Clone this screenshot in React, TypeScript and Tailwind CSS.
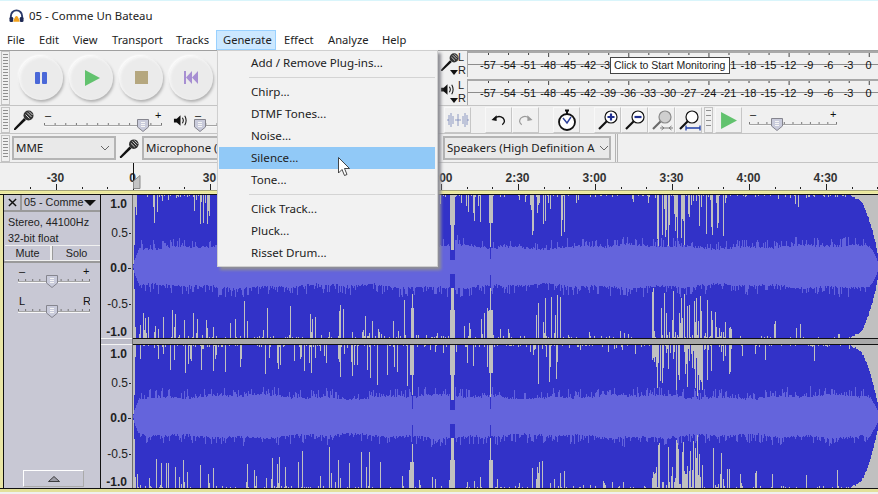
import React from 'react';

const ui = "font-['Noto_Sans',sans-serif]";
const arial = "font-['Liberation_Sans',Arial,sans-serif]";

const menus = [
  ['File', 'w-[32px]'],
  ['Edit', 'w-[34px]'],
  ['View', 'w-[39px]'],
  ['Transport', 'w-[64px]'],
  ['Tracks', 'w-[40px]'],
];

const Gripper = ({ h }: { h: string }) => (
  <div className={`${h} w-[9px] ml-[1px] mr-[1px] shrink-0 border border-[#c4c4c4] px-[1px] py-[2px]`}>
    <div className="h-full w-full bg-[repeating-linear-gradient(to_bottom,#8f8f8f_0,#8f8f8f_1px,#f0f0f0_1px,#f0f0f0_3px)]" />
  </div>
);

const Mic = ({ className }: { className: string }) => (
  <svg viewBox="0 0 22 22" className={className}>
    <path d="M1 21 L2.5 21 L13 11 L11 9 L1 19.5 Z" fill="#111" />
    <circle cx="15.5" cy="6.5" r="5" fill="#333" />
    <path d="M12.5 5.5 L16.5 9.5 M14 3.5 L18.5 8 M16 2.5 L19.5 6" stroke="#e4e4e4" strokeWidth="0.9" />
  </svg>
);

const Speaker = ({ className }: { className: string }) => (
  <svg viewBox="0 0 16 16" className={className}>
    <path d="M1 6 H4 L8 2.5 V13.5 L4 10 H1 Z" fill="#111" />
    <path d="M10 5 Q12 8 10 11 M12.5 3 Q15.5 8 12.5 13" stroke="#111" strokeWidth="1.1" fill="none" />
  </svg>
);

// shield shaped thumb with the tick track behind it
const Slider = ({ w, pos, left, right, ticks = 11 }: { w: number; pos: number; left: string; right: string; ticks?: number }) => (
  <svg width={w} height={22} viewBox={`0 0 ${w} 22`} className="shrink-0 block">
    <text x={1} y={9} fontSize="11" fontFamily="Liberation Sans" fill="#111">{left}</text>
    <text x={w - 7} y={9} fontSize="11" fontFamily="Liberation Sans" fill="#111">{right}</text>
    <path d={`M0.5 13 V15.5 H${w}`} stroke="#a4a4a4" fill="none" />
    <path d={`M0 16.5 H${w}`} stroke="#f8f8f8" fill="none" />
    {Array.from({ length: ticks }, (_, i) => (
      <rect key={i} x={(i * (w - 1)) / (ticks - 1)} y={13} width={1} height={2} fill="#777" />
    ))}
    <path d={`M${pos - 5.5} 9.5 H${pos + 5.5} V17 L${pos} 21.5 L${pos - 5.5} 17 Z`} fill="#c9cbdb" stroke="#85858e" />
    <path d={`M${pos - 2} 12.5 H${pos + 2} M${pos - 2} 14.5 H${pos + 2} M${pos - 2} 16.5 H${pos + 2}`} stroke="#f5f5f5" />
  </svg>
);

const Round = ({ children }: { children: React.ReactNode }) => (
  <div className="w-[44px] h-[44px] rounded-full bg-[#ebebeb] flex items-center justify-center shadow-[1px_2px_3px_#b0b0b0,-1px_-1px_2px_#ffffff,inset_1px_1px_3px_#fbfbfb] shrink-0">
    {children}
  </div>
);

const ToolBtn = ({ children, className = '' }: { children: React.ReactNode; className?: string }) => (
  <div className={`w-[27px] h-[26px] flex items-center justify-center border-r border-b border-[#c6c6c6] border-t border-t-[#f8f8f8] border-l border-l-[#f8f8f8] shrink-0 ${className}`}>
    {children}
  </div>
);

const ZoomIcon = ({ inner, lens = '#111', handle = '#111' }: { inner?: React.ReactNode; lens?: string; handle?: string }) => (
  <svg viewBox="0 0 24 24" className="w-[24px] h-[24px]">
    <path d="M3 21 L11 13" stroke={handle} strokeWidth="2.2" />
    <circle cx="15" cy="9" r="6" fill={lens === '#111' ? '#fff' : '#cfcfcf'} stroke={lens} strokeWidth="1.2" />
    {inner}
  </svg>
);

const scale = ['-57', '-54', '-51', '-48', '-45', '-42', '-39', '-36', '-33', '-30', '-27', '-24', '-21', '-18', '-15', '-12', '-9', '-6', '-3', '0'];
const underTip = ['-36', '-33', '-30', '-27', '-24'];

const Meter = ({ icon, covered }: { icon: React.ReactNode; covered?: boolean }) => (
  <div className="flex h-[26px]">
    <div className="w-[18px] mt-[1px] relative shrink-0">{icon}</div>
    <div className={`w-[9px] shrink-0 text-[11px] leading-[13px] ${arial} text-[#222]`}>
      <div>L</div>
      <div>R</div>
    </div>
    <div className={`relative grow border-t-2 border-l border-r-2 border-[#a8a8a8] pl-[11px] ${arial}`}>
      <svg width="400" height="4" className="block absolute top-0 left-[20px]">
        {scale.map((s, i) => (
          <rect key={s} x={i * 20.04} y={0} width={1} height={i % 4 === 3 ? 4 : 2} fill="#444" />
        ))}
      </svg>
      <div className="absolute left-0 right-0 top-[11px] h-px bg-[#8c8c8c]" />
      <div className="relative flex mt-[5px] -ml-[1px]">
        {scale.map((s) => (
          <div key={s} className="w-[20.04px] shrink-0 text-center text-[11px] leading-[14px] text-[#111]">
            {covered && underTip.includes(s) ? '' : s}
          </div>
        ))}
      </div>
    </div>
  </div>
);

const Combo = ({ label, w, clip }: { label: string; w: string; clip?: boolean }) => (
  <div className={`${w} h-[24px] border-2 border-[#b4b4b4] bg-[#e9e9e9] flex items-center pl-[2px] shrink-0 text-[11.5px] text-[#222] ${ui} overflow-hidden`}>
    <span className="whitespace-nowrap grow">{label}</span>
    {!clip && (
      <svg viewBox="0 0 10 6" className="w-[10px] h-[6px] mx-[4px] shrink-0">
        <path d="M1 1 L5 5 L9 1" stroke="#666" fill="none" />
      </svg>
    )}
  </div>
);

const Ruler = () => {
  const labels = ['-30', '0', '30', '1:00', '1:30', '2:00', '2:30', '3:00', '3:30', '4:00', '4:30'];
  return (
    <div className="h-[27px] bg-[#f0f0f0] relative shrink-0 overflow-hidden">
      <div className={`flex pl-[17px] pt-[8px] h-[20px] ${arial} text-[12px] font-bold text-[#333] leading-[14px]`}>
        {labels.map((l) => (
          <div key={l} className="w-[77px] shrink-0 text-center">{l}</div>
        ))}
      </div>
      <svg width="878" height="7" className="block">
        {Array.from({ length: 34 }, (_, i) => {
          const x = 56 + (i - 1) * 25.67;
          const major = (i - 1) % 3 === 0;
          return <rect key={i} x={Math.round(x)} y={major ? 1 : 4} width={1} height={major ? 6 : 2} fill="#222" />;
        })}
      </svg>
      <div className="absolute left-[133px] top-0 w-px h-[26px] bg-[#111]" />
      <svg viewBox="0 0 8 14" className="absolute left-[133px] top-[12px] w-[8px] h-[14px]">
        <path d="M0.5 6 L7 0.5 V13.5 H0.5 Z" fill="#c4c4c4" stroke="#8a8a8a" />
      </svg>
    </div>
  );
};

const VRuler = () => (
  <div className={`h-[143px] w-full flex flex-col items-end ${arial} text-[12px] leading-[14px] text-[#222] pr-[1px] pt-[2px]`}>
    <div className="font-bold pr-[4px]">1.0</div>
    <div className="mt-[15px] flex items-center"><span>0.5</span><span className="w-[2px] h-px bg-[#222] ml-[1px]" /></div>
    <div className="mt-[21px] flex items-center font-bold"><span>0.0</span><span className="w-[3px] h-px bg-[#222] ml-[1px]" /></div>
    <div className="mt-[22px] flex items-center"><span>-0.5</span><span className="w-[2px] h-px bg-[#222] ml-[1px]" /></div>
    <div className="mt-[14px] flex items-center font-bold pr-[4px]"><span>-1.0</span></div>
  </div>
);

// seeded waveform, one column per pixel
function buildWave(seed: number, gaps: number[][], dense: number[][], thin: number[]) {
  let s = seed;
  const rnd = () => {
    s = (s * 1664525 + 1013904223) % 4294967296;
    return s / 4294967296;
  };
  const fade = [[851, 71], [860, 67], [863, 62], [870, 44], [875, 25], [878, 9]];
  const mid = 71.5;
  let peak = '';
  let rms = '';
  for (let x = 133; x < 878; x++) {
    let limit = 71.5;
    if (x === 133) limit = 3;
    if (x === 134) limit = 22;
    if (x === 135) limit = 60;
    for (let i = 0; i < fade.length - 1; i++) {
      if (x >= fade[i][0] && x <= fade[i + 1][0]) {
        const t = (x - fade[i][0]) / (fade[i + 1][0] - fade[i][0]);
        limit = fade[i][1] + (fade[i + 1][1] - fade[i][1]) * t - rnd() * 2;
      }
    }
    let top = rnd() < 0.18 ? rnd() * 2 : 0;
    let bot = rnd() < 0.18 ? rnd() * 2 : 0;
    for (const [a, b, p, d, base] of dense) {
      if (x >= a && x < b) {
        if (rnd() < p) top = Math.max(top, (base || 0) + Math.pow(rnd(), 1.4) * d * 1.15);
        if (rnd() < p) bot = Math.max(bot, (base || 0) + Math.pow(rnd(), 1.4) * d * 1.15);
      }
    }
    for (const [a, b, dt, db] of gaps) {
      if (x >= a && x < b) {
        top = Math.max(top, dt);
        bot = Math.max(bot, db);
      }
    }
    const up = Math.max(1, Math.min(limit, 71.5 - top));
    const down = Math.max(1, Math.min(limit, 71.5 - bot));
    peak += `M${x - 133}.5 ${(mid - up).toFixed(0)}V${(mid + down).toFixed(0)}`;
    const base = 18.5 + Math.sin(x / 31) * 1.5 + Math.sin(x / 9 + seed) * 1;
    let r = base + rnd() * 2.5;
    let r2 = base + rnd() * 2.5;
    if (rnd() < 0.35) r += rnd() * 9;
    if (rnd() < 0.35) r2 += rnd() * 9;
    if (x < 140) {
      r = Math.min(r, 4 + (x - 133) * 2.5);
      r2 = Math.min(r2, 4 + (x - 133) * 2.5);
    }
    if (x >= 450 && x < 455) {
      r = 7;
      r2 = 7;
    }
    if (thin.includes(x)) {
      r = 8;
      r2 = 8;
    }
    r = Math.min(r, limit * 0.45);
    r2 = Math.min(r2, limit * 0.45);
    rms += `M${x - 133}.5 ${(mid - r).toFixed(0)}V${(mid + r2).toFixed(0)}`;
  }
  return { peak, rms };
}

const denseA = [
  [136, 217, 0.22, 26],
  [217, 320, 0.2, 34],
  [320, 410, 0.2, 36],
  [414, 450, 0.1, 10],
  [455, 490, 0.2, 26],
  [493, 530, 0.1, 10],
  [530, 565, 0.35, 38],
  [565, 652, 0.1, 8],
  [652, 703, 0.6, 44, 3],
  [703, 732, 0.45, 36],
  [732, 850, 0.07, 16],
];
const notches = [
  [450, 455, 30, 28],
  [451, 454, 55, 50],
  [489, 493, 28, 28],
  [490, 491, 52, 50],
];
const wave1 = buildWave(7, [[411, 414, 8, 30], [412, 413, 8, 44], ...notches], denseA, [490]);
const wave2 = buildWave(91, [[410, 414, 30, 26], [412, 413, 50, 44], ...notches], denseA, [412, 490]);

const Wave = ({ d }: { d: { peak: string; rms: string } }) => (
  <svg width="745" height="143" viewBox="0 0 745 143" shapeRendering="crispEdges" className="block bg-[#c0c0c0]">
    <path d={d.peak} stroke="#3232c8" strokeWidth="1" fill="none" />
    <path d={d.rms} stroke="#6464dc" strokeWidth="1" fill="none" />
  </svg>
);

const TrackPanel = () => (
  <div className={`w-[96px] shrink-0 bg-[#c8c8d4] flex flex-col text-[#222] ${arial} text-[10.8px]`}>
    <div className="flex h-[17px] border-b-2 border-[#9a9a9a]">
      <div className="w-[17px] flex items-center justify-center border-r-2 border-[#9a9a9a] ml-[1px]">
        <svg viewBox="0 0 10 10" className="w-[9px] h-[9px]">
          <path d="M1 1 L9 9 M9 1 L1 9" stroke="#111" strokeWidth="1.6" />
        </svg>
      </div>
      <div className="grow flex items-center pl-[2px] whitespace-nowrap">
        <span className="grow">05 - Comme</span>
        <svg viewBox="0 0 12 6" className="w-[12px] h-[6px] mr-[4px]">
          <path d="M0 0 H12 L6 6 Z" fill="#111" />
        </svg>
      </div>
    </div>
    <div className="pl-[4px] pt-[2px] leading-[16px] h-[33px]">
      <div>Stereo, 44100Hz</div>
      <div>32-bit float</div>
    </div>
    <div className="flex h-[16px] ml-[1px] text-center leading-[14px] border-y border-[#f0f0f0]">
      <div className="w-[47px] border-r-2 border-[#f0f0f0]">Mute</div>
      <div className="grow border-l border-[#9a9a9a]">Solo</div>
    </div>
    <div className="border-t-2 border-[#9a9a9a] pl-[14px] pt-[3px]">
      <Slider w={72} pos={34} left="–" right="+" ticks={11} />
      <div className="mt-[8px]">
        <Slider w={72} pos={34} left="L" right="R" ticks={11} />
      </div>
    </div>
    <div className="mt-auto ml-[19px] mb-[1px] w-[61px] h-[17px] border border-t-white border-l-white border-r-[#aaa] border-b-[#aaa] flex items-center justify-center">
      <svg viewBox="0 0 12 6" className="w-[12px] h-[6px]">
        <path d="M6 0.5 L11.5 5.5 H0.5 Z" fill="#9a9aa4" stroke="#222" strokeWidth="0.8" />
      </svg>
    </div>
  </div>
);

const Tracks = () => (
  <div className="shrink-0">
    <div className="h-[5px] bg-[linear-gradient(to_bottom,#6f6f60,#f1eea0_30%,#e7e49a_70%,#f3f0b5)] border-b border-[#111]" />
    <div className="flex h-[293px]">
      <div className="w-[3px] bg-[#e9e6a4]" />
      <div className="w-px bg-[#111]" />
      <TrackPanel />
      <div className="w-px bg-[#111]" />
      <div className="w-[31px] bg-[#c8c8d4] flex flex-col">
        <VRuler />
        <div className="h-[7px] border-y border-[#f4f4f4] bg-[#bcbcc8]" />
        <VRuler />
      </div>
      <div className="w-px bg-[#6f6f6f]" />
      <div className="w-[745px]">
        <Wave d={wave1} />
        <div className="h-[7px] bg-[#a9a9a9] border-y border-[#111]" />
        <Wave d={wave2} />
      </div>
    </div>
    <div className="h-[4px] border-t border-[#111] bg-[#e3e09a]" />
  </div>
);

const GenerateMenu = () => {
  const Item = ({ t, on }: { t: string; on?: boolean }) => (
    <div className={`h-[22px] flex items-center pl-[32px] ${on ? 'bg-[#91c9f7]' : ''}`}>{t}</div>
  );
  const Sep = () => (
    <div className="h-[7px] pl-[30px] flex items-center">
      <div className="h-px w-full bg-[#d4d4d4]" />
    </div>
  );
  return (
    <div className={`absolute left-[217px] top-[50px] w-[221px] h-[217px] bg-[#f2f2f2] border border-[#cfcfcf] pl-[1px] pr-[2px] pt-[1px] shadow-[3px_3px_3px_#8f8f95] text-[11.6px] text-[#222] ${ui}`}>
      <Item t="Add / Remove Plug-ins..." />
      <Sep />
      <Item t="Chirp..." />
      <Item t="DTMF Tones..." />
      <Item t="Noise..." />
      <Item t="Silence..." on />
      <Item t="Tone..." />
      <Sep />
      <Item t="Click Track..." />
      <Item t="Pluck..." />
      <Item t="Risset Drum..." />
    </div>
  );
};

export default function App() {
  return (
    <div className={`w-[878px] h-[494px] overflow-hidden relative bg-[#f0f0f0] flex flex-col ${ui}`}>
      {/* title bar */}
      <div className="h-[30px] bg-white border-t border-[#d9f5fb] flex items-center pl-[9px] shrink-0 text-[11.4px] text-[#222]">
        <svg viewBox="0 0 16 14" className="w-[15px] h-[14px] mr-[5px] shrink-0">
          <path d="M2 9 V7 A6 6 0 0 1 14 7 V9" stroke="#2b3a6b" strokeWidth="2" fill="none" />
          <rect x="0.5" y="8" width="4" height="5.5" rx="1.5" fill="#1f2a55" />
          <rect x="11.5" y="8" width="4" height="5.5" rx="1.5" fill="#1f2a55" />
          <path d="M4.5 13 Q8 1 11.5 13 Z" fill="#f2a21e" />
        </svg>
        <span>05 - Comme Un Bateau</span>
      </div>
      {/* menu bar */}
      <div className="h-[20px] bg-white flex items-center shrink-0 text-[11.2px] text-[#222] pl-[7px]">
        {menus.map(([m, c]) => (
          <span key={m} className={c}>{m}</span>
        ))}
        <span className="w-[60px] h-[20px] pl-[6px] bg-[#cce8ff] border border-[#99d1ff] flex items-center">Generate</span>
        <span className="ml-[8px] w-[44px]">Effect</span>
        <span className="w-[54px]">Analyze</span>
        <span>Help</span>
      </div>
      {/* row 1 */}
      <div className="h-[55px] flex border-t border-[#a0a0a0] shrink-0">
        <Gripper h="h-[54px]" />
        <div className="flex items-center gap-[6px] pl-[8px] -mt-[1px]">
          <Round>
            <div className="flex gap-[2px]">
              <div className="w-[5px] h-[12px] bg-[#4a68d8] rounded-[1px]" />
              <div className="w-[5px] h-[12px] bg-[#4a68d8] rounded-[1px]" />
            </div>
          </Round>
          <Round>
            <svg viewBox="0 0 15 16" className="w-[15px] h-[16px] ml-[2px]">
              <path d="M0 0 L15 8 L0 16 Z" fill="#62c26e" />
            </svg>
          </Round>
          <Round>
            <div className="w-[13px] h-[13px] bg-[#b5a77f]" />
          </Round>
          <Round>
            <svg viewBox="0 0 14 13" className="w-[14px] h-[13px]">
              <path d="M0 0 H2 V13 H0 Z M8 0 V13 L2 6.5 Z M14 0 V13 L8 6.5 Z" fill="#a78fd2" />
            </svg>
          </Round>
        </div>
        <div className="ml-auto w-[438px] flex flex-col gap-[2px]">
          <Meter covered icon={<><Mic className="w-[20px] h-[20px]" /><svg viewBox="0 0 8 5" className="absolute left-[10px] top-[18px] w-[8px] h-[5px]"><path d="M0 0 H8 L4 5 Z" fill="#111" /></svg></>} />
          <Meter icon={<><Speaker className="w-[15px] h-[15px] mt-[2px]" /><svg viewBox="0 0 8 5" className="absolute left-[10px] top-[18px] w-[8px] h-[5px]"><path d="M0 0 H8 L4 5 Z" fill="#111" /></svg></>} />
        </div>
      </div>
      {/* row 2 */}
      <div className="h-[28px] flex border-t border-[#c4c4c4] pt-[1px] shrink-0 items-start">
        <Gripper h="h-[26px]" />
        <Mic className="w-[22px] h-[22px] ml-[2px] mt-[2px] shrink-0" />
        <div className="ml-[9px] mt-[3px]"><Slider w={118} pos={99} left="–" right="+" ticks={12} /></div>
        <Speaker className="w-[15px] h-[15px] ml-[11px] mt-[6px] shrink-0" />
        <div className="ml-[6px] mt-[3px]"><Slider w={80} pos={6} left="–" right="" ticks={8} /></div>
        <div className="ml-auto flex items-center w-[434px]">
          <ToolBtn className="border-[#bbb] border-t-[#bbb] border-l-[#bbb]">
            <svg viewBox="0 0 24 18" className="w-[24px] h-[18px]">
              <path d="M1 9 H3 M3 4 V14 M5 2 V16 M7 5 V13 M9 9 H15 M12 3 V15 M17 5 V13 M19 2 V16 M21 4 V14 M21 9 H23" stroke="#7484b6" strokeWidth="0.8" fill="none" />
            </svg>
          </ToolBtn>
          <div className="w-[14px]" />
          <ToolBtn>
            <svg viewBox="0 0 16 12" className="w-[15px] h-[12px]">
              <path d="M3 5 Q8 0 13 4 Q16 8 12 11" stroke="#111" strokeWidth="1.4" fill="none" />
              <path d="M0.5 6 L6 1 L6 7 Z" fill="#111" />
            </svg>
          </ToolBtn>
          <ToolBtn>
            <svg viewBox="0 0 16 12" className="w-[15px] h-[12px]">
              <path d="M13 5 Q8 0 3 4 Q0 8 4 11" stroke="#9a9a9a" strokeWidth="1.2" fill="none" />
              <path d="M15.5 6 L10 1 L10 7 Z" fill="#9a9a9a" />
            </svg>
          </ToolBtn>
          <div className="w-[14px]" />
          <ToolBtn>
            <svg viewBox="0 0 20 22" className="w-[20px] h-[22px]">
              <rect x="8" y="0.5" width="4" height="2" fill="#111" />
              <rect x="9" y="2" width="2" height="3" fill="#111" />
              <circle cx="10" cy="13" r="8" fill="#fff" stroke="#111" strokeWidth="1.8" />
              <path d="M6 9 L10 14 L14 8" stroke="#2c3f9a" strokeWidth="1.4" fill="none" />
            </svg>
          </ToolBtn>
          <div className="w-[14px]" />
          <ToolBtn>
            <ZoomIcon inner={<path d="M11.5 9 H18.5 M15 5.5 V12.5" stroke="#1f2f90" strokeWidth="2.2" />} />
          </ToolBtn>
          <ToolBtn>
            <ZoomIcon inner={<path d="M11.5 9 H18.5" stroke="#1f2f90" strokeWidth="2.2" />} />
          </ToolBtn>
          <ToolBtn>
            <ZoomIcon lens="#8a8a8a" handle="#6a6a6a" inner={<path d="M10 20 H23 M14 20 L11.5 18 M14 20 L11.5 22 M19 20 L21.5 18 M19 20 L21.5 22" stroke="#7a7a7a" strokeWidth="1" fill="none" />} />
          </ToolBtn>
          <ToolBtn>
            <ZoomIcon inner={<path d="M9 20 H23 M9 17.5 V22.5 M23 17.5 V22.5" stroke="#1f3fa8" strokeWidth="1.3" fill="none" />} />
          </ToolBtn>
          <div className="ml-[2px] h-[26px] w-[9px] border border-[#c4c4c4] px-[1px] py-[2px]">
            <div className="h-full bg-[repeating-linear-gradient(to_bottom,#8f8f8f_0,#8f8f8f_1px,#f0f0f0_1px,#f0f0f0_5px)]" />
          </div>
          <ToolBtn className="ml-[2px]">
            <svg viewBox="0 0 15 16" className="w-[16px] h-[17px]">
              <path d="M0 0 L15 8 L0 16 Z" fill="#62c26e" />
            </svg>
          </ToolBtn>
          <div className="ml-[7px]"><Slider w={88} pos={28} left="–" right="+" ticks={11} /></div>
        </div>
      </div>
      {/* row 3 */}
      <div className="h-[30px] flex items-center border-t border-[#c4c4c4] border-b shrink-0 border-b-[#c4c4c4]">
        <Gripper h="h-[27px]" />
        <Combo label="MME" w="w-[104px] ml-[1px]" />
        <Mic className="w-[21px] h-[21px] ml-[3px] shrink-0" />
        <Combo label="Microphone (High Definition Audio Device)" w="w-[296px] ml-[2px]" clip />
        <div className="ml-[5px]" />
        <Combo label="Speakers (High Definition A" w="w-[168px]" />
        <div className="ml-[4px] w-[3px] h-[28px] border-x border-[#b4b4b4]" />
      </div>
      <Ruler />
      <Tracks />

      <GenerateMenu />

      {/* monitoring tooltip */}
      <div className={`absolute left-[610px] top-[57px] w-[120px] h-[17px] bg-white border border-[#444] pl-[3px] text-[10.5px] leading-[15px] text-[#222] whitespace-nowrap ${arial}`}>
        Click to Start Monitoring
      </div>

      {/* mouse pointer */}
      <svg viewBox="0 0 13 20" className="absolute left-[338px] top-[157px] w-[13px] h-[20px]">
        <path d="M0.5 0.5 V16 L4 12.5 L6.5 18.5 L9 17.5 L6.5 11.5 H11.5 Z" fill="#fff" stroke="#333" strokeWidth="0.9" />
      </svg>
    </div>
  );
}
